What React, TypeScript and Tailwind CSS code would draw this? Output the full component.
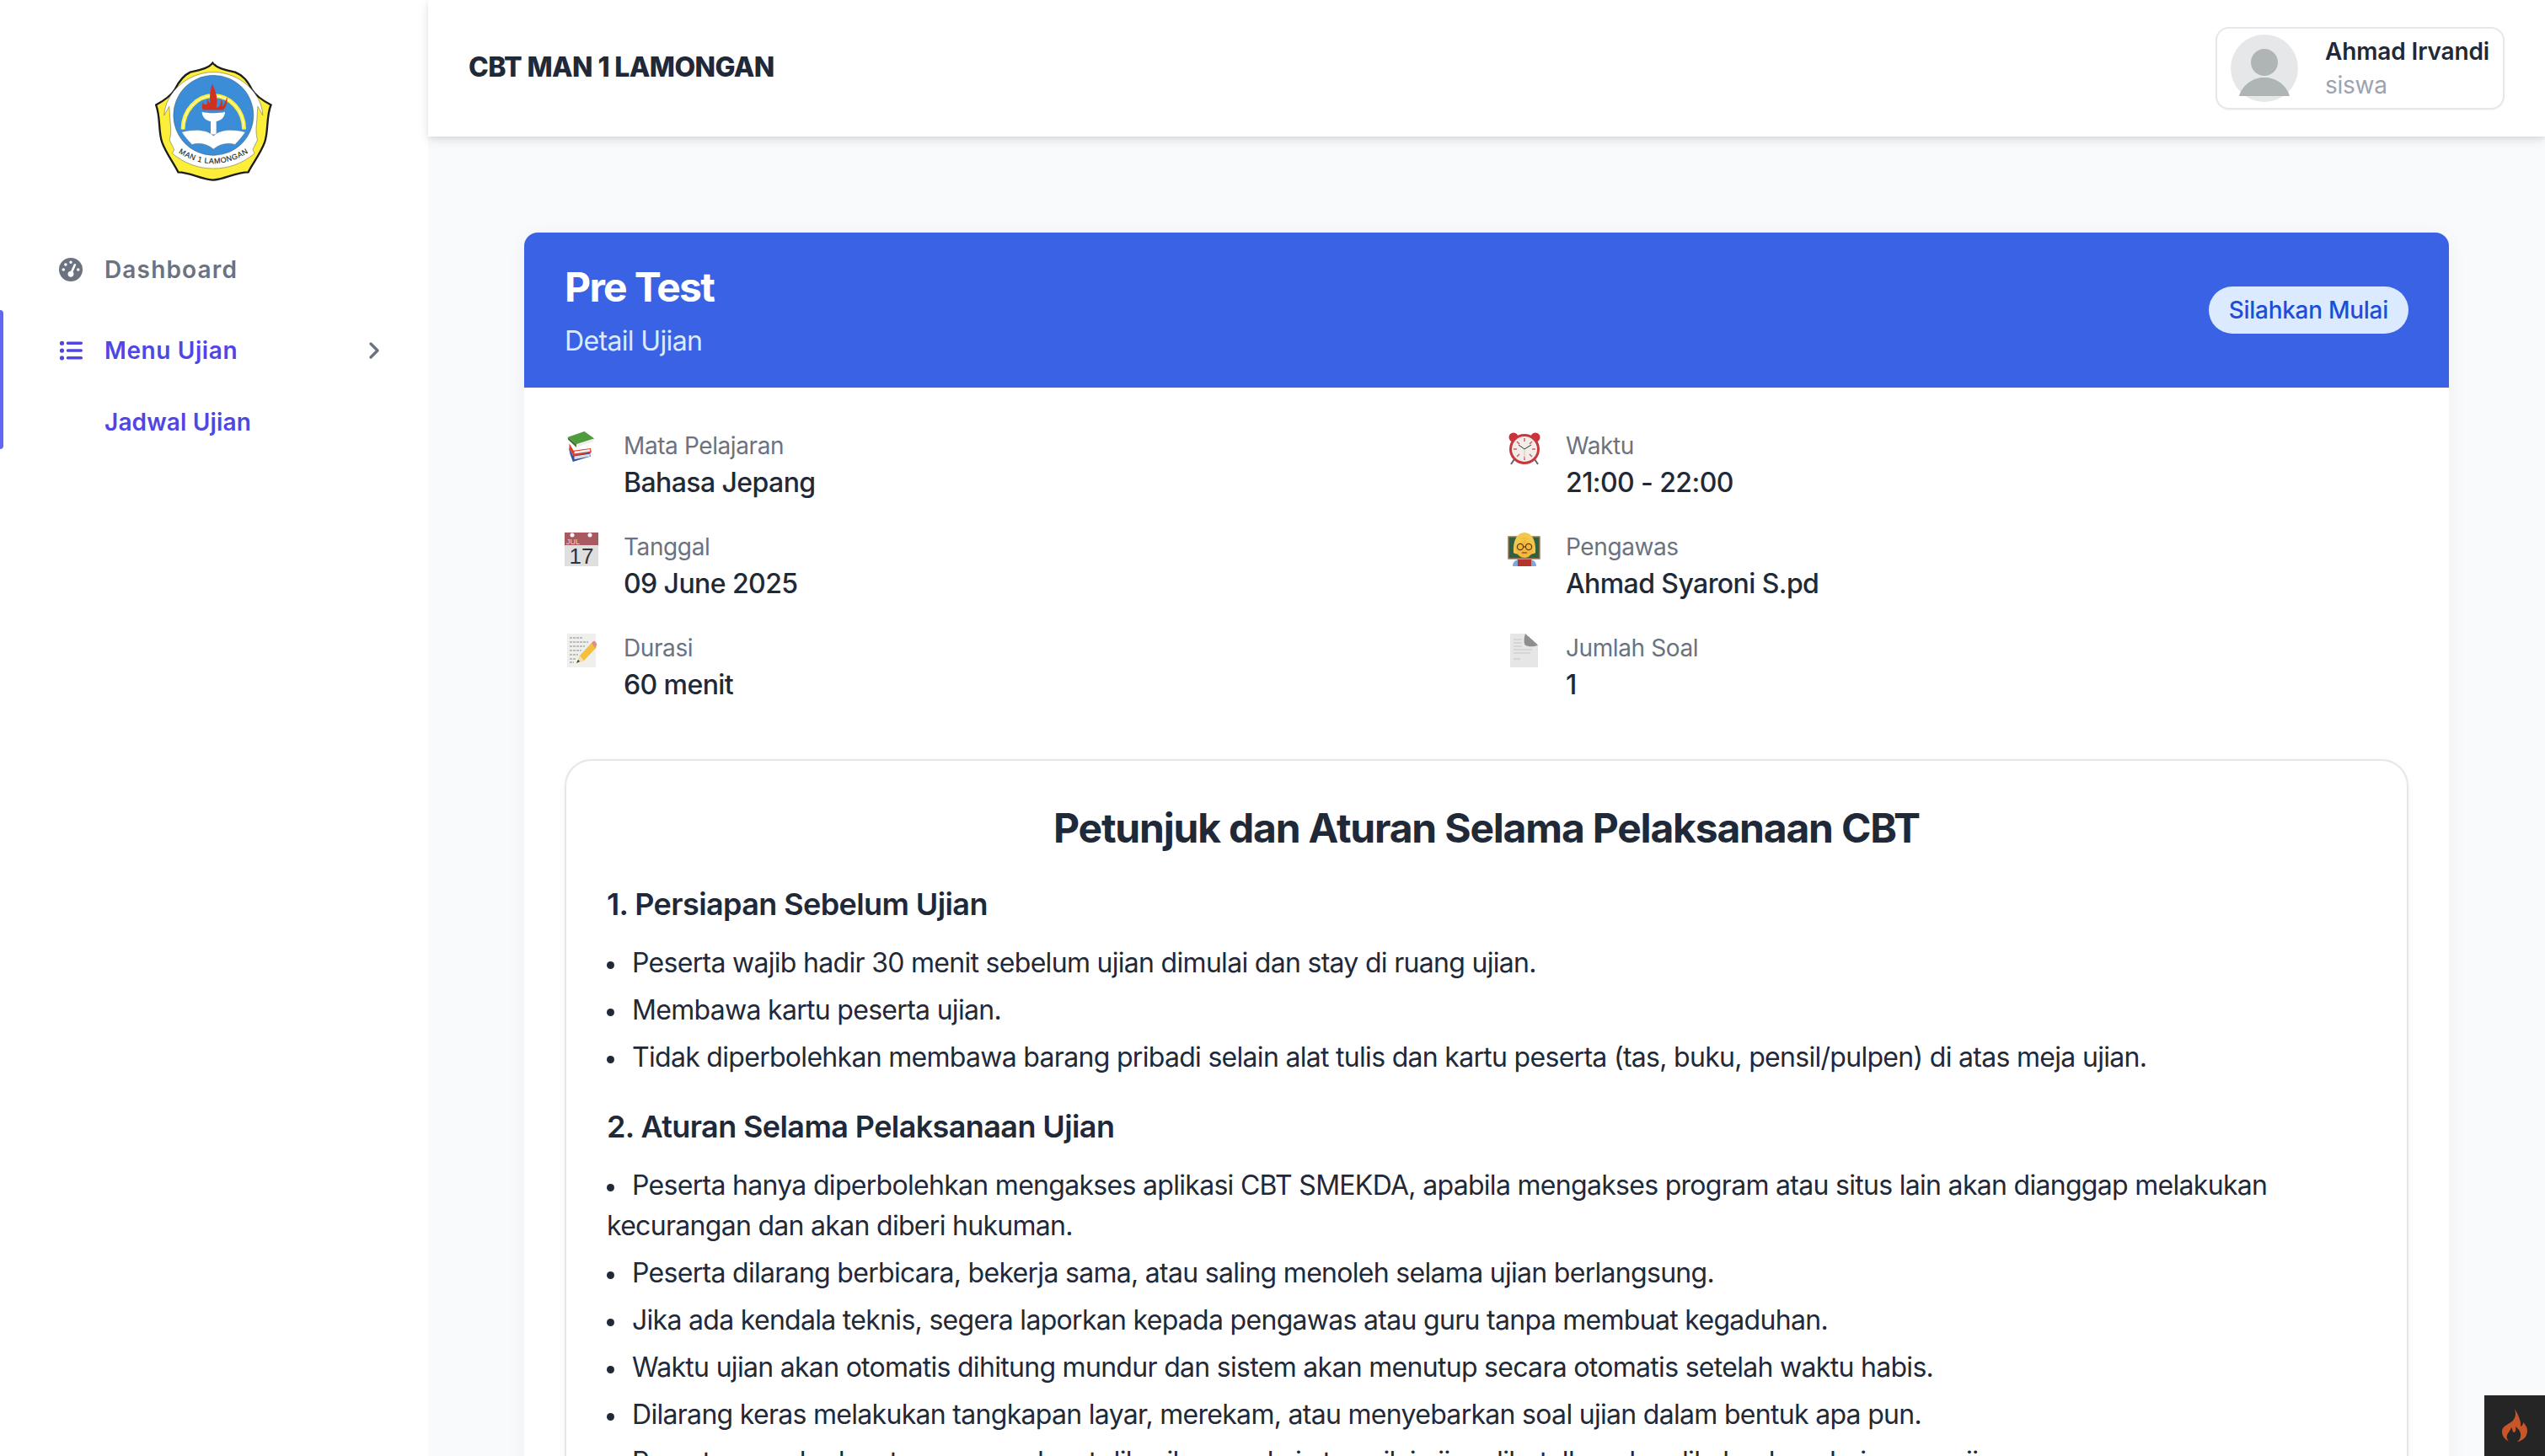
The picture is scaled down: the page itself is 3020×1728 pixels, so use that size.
import React from "react";
import { FaGaugeHigh, FaListUl } from "react-icons/fa6";
import { ChevronRight } from "lucide-react";

const Logo = () => (
  <svg viewBox="100 70 420 430" className="w-[140px] h-[143px]">
    <path d="M305 75C320 95 350 100 385 108C415 120 430 140 445 170C460 195 485 210 513 225C495 270 505 320 490 360C475 400 450 430 432 465C385 465 350 490 305 493C260 490 225 465 182 465C165 430 140 400 125 360C110 320 120 270 103 225C130 210 155 195 170 170C185 140 200 120 225 108C260 100 290 95 305 75Z" fill="#fdee3a" stroke="#1c1c1c" strokeWidth="7" />
    <path d="M308 108C400 108 480 180 484 262L466 230L462 290C458 320 462 340 465 350L448 385L455 398C410 435 360 452 308 452C256 452 206 435 161 398L168 385L151 350C154 340 158 320 154 290L150 230L132 262C136 180 216 108 308 108Z" fill="#fff" stroke="#555" strokeWidth="1.5" />
    <circle cx="308" cy="262" r="143" fill="#3b8dd8" stroke="#333" strokeWidth="1" />
    <path d="M199 312A109 120 0 0 1 417 312" fill="none" stroke="#fdee3a" strokeWidth="15" />
    <path d="M199 312A109 120 0 0 1 417 312" fill="none" stroke="#fff" strokeWidth="3" />
    <path d="M303 150C315 175 325 195 318 235C330 235 335 220 335 205C342 215 340 225 338 232C345 228 352 210 357 195C358 215 352 235 342 243L272 243C265 238 268 225 270 215C275 225 280 225 285 222C285 215 285 208 288 205C290 212 293 218 297 218C292 195 298 170 303 150Z" fill="#d0301f" />
    <path d="M267 250C285 256 330 256 349 250C349 268 335 282 318 284L318 330L298 330L298 284C281 282 267 268 267 250Z" fill="#fff" />
    <path d="M195 322C240 310 285 312 308 335C331 312 376 310 421 322C410 340 400 350 385 366C355 358 330 365 308 383C286 365 261 358 231 366C216 350 206 340 195 322Z" fill="#fff" stroke="#666" strokeWidth="1" />
    <path id="logo-arc" d="M172 388Q305 480 445 388" fill="none" />
    <text fontFamily="'Liberation Sans', sans-serif" fontSize="27" fill="#222" stroke="#222" strokeWidth="0.4" letterSpacing="1.5">
      <textPath href="#logo-arc" startOffset="50%" textAnchor="middle">MAN 1 LAMONGAN</textPath>
    </text>
  </svg>
);

const Books = () => (
  <svg viewBox="0 0 40 40" className="ml-[3px] w-[34px] h-[38px]" preserveAspectRatio="none">
    <path d="M2 20L4 28L8 38L33 31L32 24L8 30Z" fill="#2f4fa8" />
    <path d="M3 15L9 24L33 21L34 26L9 31L3 22Z" fill="#d6402a" />
    <path d="M10 25L32 22L32 25L10 28Z" fill="#eee" />
    <path d="M10 31L33 28L32 31L10 35Z" fill="#ddd" />
    <path d="M1 7L24 0L38 9L13 16Z" fill="#4f9c3f" />
    <path d="M1 7L13 16L13 20L1 10Z" fill="#3a7a2e" />
    <path d="M13 16L38 9L36 13L13 20Z" fill="#eee" />
  </svg>
);

const Calendar = () => (
  <svg viewBox="0 0 40 40" className="w-[40px] h-[40px]">
    <rect x="0" y="0" width="40" height="40" fill="#dfdfdf" />
    <rect x="0" y="0" width="40" height="15" fill="#a85a60" />
    <circle cx="9" cy="3" r="2.5" fill="#fff" />
    <circle cx="30" cy="3" r="2.5" fill="#fff" />
    <text x="2" y="14" fontSize="9" fill="#e9d5d6" fontFamily="'Liberation Sans', sans-serif">JUL</text>
    <text x="20" y="37" fontSize="26" textAnchor="middle" fill="#333" fontFamily="'Liberation Sans', sans-serif">17</text>
  </svg>
);

const Memo = () => (
  <svg viewBox="0 0 40 40" className="w-[40px] h-[40px]">
    <rect x="3" y="0" width="34" height="40" fill="#efefec" />
    <path d="M6 5H22M6 10H28M6 15H24M6 20H20M6 25H16M6 30H13M6 34H11" stroke="#8a8a8a" strokeWidth="1.2" strokeDasharray="3 1" />
    <path d="M14 35L18 26L32 11L38 16L23 32Z" fill="#f4bf3a" />
    <path d="M32 11L34 9C36 8 39 12 38 14L36 17Z" fill="#e58a8a" />
    <path d="M14 35L18 26L23 32Z" fill="#f2dcb0" />
    <path d="M14 35L16 31L18 33Z" fill="#333" />
  </svg>
);

const Clock = () => (
  <svg viewBox="0 0 40 40" className="ml-[1px] w-[40px] h-[40px]">
    <path d="M8 33L4 39M32 33L36 39" stroke="#666" strokeWidth="2" />
    <circle cx="7" cy="7" r="5.5" fill="#c9343a" />
    <circle cx="33" cy="7" r="5.5" fill="#c9343a" />
    <circle cx="20" cy="21" r="18" fill="#c6383e" />
    <circle cx="20" cy="21" r="15" fill="#f1eeea" />
    <path d="M20 8V12M20 30V34M7 21H11M29 21H33M11 12L14 15M29 12L26 15M11 30L14 27M29 30L26 27" stroke="#d95a5f" strokeWidth="1.5" />
    <path d="M13 16L20 21L28 16" stroke="#333" strokeWidth="1" fill="none" />
    <path d="M20 21V32" stroke="#d8c9a8" strokeWidth="1" />
  </svg>
);

const Teacher = () => (
  <svg viewBox="0 0 40 40" className="ml-[1px] w-[40px] h-[40px]">
    <rect x="1" y="5" width="37" height="26" fill="#2f5f45" stroke="#a0764a" strokeWidth="1.5" />
    <path d="M6 40C6 33 12 31 20 31C28 31 34 33 34 40Z" fill="#7fa6d9" />
    <rect x="12" y="32" width="16" height="8" fill="#b5322e" />
    <path d="M7 24C6 8 12 0 20 0C28 0 34 8 33 24C30 27 10 27 7 24Z" fill="#f2c94c" />
    <ellipse cx="20" cy="18" rx="10.5" ry="12" fill="#f5b83d" />
    <path d="M10 16C14 14 18 10 21 8C23 11 27 14 30 16L30 8L10 8Z" fill="#f2c94c" />
    <circle cx="15" cy="17" r="3.6" fill="none" stroke="#5a3a1a" strokeWidth="1.2" />
    <circle cx="25" cy="17" r="3.6" fill="none" stroke="#5a3a1a" strokeWidth="1.2" />
    <path d="M18.6 17H21.4" stroke="#5a3a1a" strokeWidth="1.2" />
    <path d="M17 24H23" stroke="#8a4a1a" strokeWidth="1.4" />
  </svg>
);

const PageIcon = () => (
  <svg viewBox="0 0 40 40" className="w-[40px] h-[40px]">
    <path d="M4 0H22C24 6 28 13 37 14V40H4Z" fill="#e6e6e6" />
    <path d="M22 0C25 3 34 10 37 14C30 16 22 16 21 12C20 8 21 3 22 0Z" fill="#8e8e8e" />
    <path d="M8 7H18M8 11H18M8 15H18M8 19H30M8 23H28M8 30H16" stroke="#cfcfcf" strokeWidth="1.4" />
  </svg>
);

const Flame = () => (
  <svg viewBox="0 0 32 40" className="w-[32px] h-[40px]">
    <path d="M16 0C18 6 17 10 14 14C10 18 1 20 1 27C1 33 5 36 9 39C7 36 6 34 7 31C8 28 11 26 12 22C14 25 13 27 15 28C17 28 18 25 17 21C21 24 24 28 23 33C22.5 36 21 37 19 39C26 38 31 33 31 26C31 22 29 19 26 16C26 19 25 20 23 21C24 16 21 8 16 0Z" fill="#c85628" />
    <path d="M15 30C18 31 20 34 18 38H13C11 35 12 32 15 30Z" fill="#252525" />
  </svg>
);

const details = [
  { icon: <Books />, label: "Mata Pelajaran", value: "Bahasa Jepang" },
  { icon: <Clock />, label: "Waktu", value: "21:00 - 22:00" },
  { icon: <Calendar />, label: "Tanggal", value: "09 June 2025" },
  { icon: <Teacher />, label: "Pengawas", value: "Ahmad Syaroni S.pd" },
  { icon: <Memo />, label: "Durasi", value: "60 menit" },
  { icon: <PageIcon />, label: "Jumlah Soal", value: "1" },
];

const sec1 = [
  "Peserta wajib hadir 30 menit sebelum ujian dimulai dan stay di ruang ujian.",
  "Membawa kartu peserta ujian.",
  "Tidak diperbolehkan membawa barang pribadi selain alat tulis dan kartu peserta (tas, buku, pensil/pulpen) di atas meja ujian.",
];
const sec2 = [
  "Peserta hanya diperbolehkan mengakses aplikasi CBT SMEKDA, apabila mengakses program atau situs lain akan dianggap melakukan kecurangan dan akan diberi hukuman.",
  "Peserta dilarang berbicara, bekerja sama, atau saling menoleh selama ujian berlangsung.",
  "Jika ada kendala teknis, segera laporkan kepada pengawas atau guru tanpa membuat kegaduhan.",
  "Waktu ujian akan otomatis dihitung mundur dan sistem akan menutup secara otomatis setelah waktu habis.",
  "Dilarang keras melakukan tangkapan layar, merekam, atau menyebarkan soal ujian dalam bentuk apa pun.",
  "Peserta yang kedapatan curang dapat diberikan sanksi atau nilai ujian dibatalkan dan dikeluarkan dari ruang ujian.",
];

const Item = ({ text }: { text: string }) => (
  <li className="mb-[8px] text-[32px] leading-[48px] tracking-[-0.7px]">
    <span className="mr-[21px] inline-block h-[9px] w-[9px] rounded-full bg-current align-middle" />
    {text}
  </li>
);

export default function App() {
  return (
    <div className="relative flex h-[1728px] w-[3020px] overflow-hidden bg-[#f9fafb] font-['Inter',sans-serif] text-[#1f2937]">
      <aside className="flex w-[508px] shrink-0 flex-col bg-white">
        <div className="flex justify-center pt-[73px]">
          <Logo />
        </div>
        <nav className="mt-[56px] flex flex-col">
          <div className="flex h-[96px] items-center gap-[26px] pl-[70px] text-[28px] font-semibold tracking-[1.15px] text-[#6b7280]">
            <FaGaugeHigh className="h-[28px] w-[28px]" />
            <span>Dashboard</span>
          </div>
          <div className="relative h-[165px]">
            <div className="absolute left-0 top-0 h-[165px] w-[4px] rounded-r-[4px] bg-[#6366f1]" />
            <div className="flex h-[95px] items-center gap-[26px] pl-[70px] pr-[48px] text-[28px] font-semibold tracking-[0.6px] text-[#4f46e5]">
              <FaListUl className="h-[28px] w-[28px]" />
              <span>Menu Ujian</span>
              <ChevronRight className="ml-auto h-[32px] w-[32px] text-[#6b7280]" strokeWidth={2.5} />
            </div>
            <div className="mt-[10px] pl-[124px] text-[28px] font-semibold leading-[56px] tracking-[0.15px] text-[#4f46e5]">Jadwal Ujian</div>
          </div>
        </nav>
      </aside>

      <main className="flex min-w-0 flex-1 flex-col">
        <header className="z-10 flex h-[162px] shrink-0 items-center justify-between bg-white pl-[48px] pr-[48px] shadow-[0_4px_12px_rgba(0,0,0,0.1),0_2px_6px_rgba(0,0,0,0.06)]">
          <h1 className="-mt-[3px] text-[32px] font-extrabold tracking-[-0.6px] text-[#1f2937]">CBT MAN 1 LAMONGAN</h1>
          <div className="flex h-[98px] items-center gap-[32px] rounded-[16px] border-2 border-[#e5e7eb] pl-[16px] pr-[16px] shadow-[0_1px_2px_rgba(0,0,0,0.05)]">
            <svg viewBox="0 0 80 80" className="h-[80px] w-[80px]">
              <circle cx="40" cy="40" r="40" fill="#e5e7e9" />
              <circle cx="40" cy="33" r="16" fill="#afb4b5" />
              <path d="M10 73C14 59 27 51 40 51C53 51 66 59 70 73Z" fill="#afb4b5" />
            </svg>
            <div className="flex flex-col">
              <span className="text-[28px] font-semibold leading-[40px] tracking-[-0.15px] text-[#1f2937]">Ahmad Irvandi</span>
              <span className="text-[28px] leading-[40px] tracking-[-0.3px] text-[#9ca3af]">siswa</span>
            </div>
          </div>
        </header>

        <div className="px-[114px] pt-[114px]">
          <section className="rounded-[16px] bg-white shadow-[0_4px_24px_rgba(0,0,0,0.05)]">
            <div className="flex h-[184px] items-center justify-between rounded-t-[16px] bg-[#3a62e5] px-[48px]">
              <div className="flex flex-col gap-[8px] pt-[2px]">
                <h2 className="text-[48px] font-bold leading-[64px] tracking-[-1.7px] text-white">Pre Test</h2>
                <p className="text-[32px] leading-[48px] tracking-[-0.65px] text-[#dbeafe]">Detail Ujian</p>
              </div>
              <span className="rounded-full bg-[#dbeafe] px-[24px] text-[28px] font-medium leading-[56px] tracking-[-0.28px] text-[#1d4ed8]">Silahkan Mulai</span>
            </div>

            <div className="p-[48px] pt-[49px]">
              <div className="grid grid-cols-2 gap-x-[48px] gap-y-[32px]">
                {details.map((d) => (
                  <div key={d.label} className="flex items-start">
                    <div className="w-[70px] shrink-0 pt-[3px]">{d.icon}</div>
                    <div>
                      <div className="text-[28px] leading-[40px] tracking-[-0.4px] text-[#6b7280]">{d.label}</div>
                      <div className="text-[32px] font-medium leading-[48px] tracking-[-0.58px] text-[#1f2937]">{d.value}</div>
                    </div>
                  </div>
                ))}
              </div>

              <div className="mt-[64px] rounded-[32px] border-2 border-[#e5e7eb] bg-white p-[48px] shadow-[0_1px_6px_rgba(0,0,0,0.05)]">
                <h3 className="mb-[30px] text-center text-[48px] font-bold leading-[64px] tracking-[-1.2px]">Petunjuk dan Aturan Selama Pelaksanaan CBT</h3>
                <h4 className="mb-[18px] text-[36px] font-semibold leading-[56px] tracking-[-0.6px]">1. Persiapan Sebelum Ujian</h4>
                <ul>
                  {sec1.map((t) => (
                    <Item key={t} text={t} />
                  ))}
                </ul>
                <h4 className="mb-[18px] mt-[30px] text-[36px] font-semibold leading-[56px] tracking-[-0.6px]">2. Aturan Selama Pelaksanaan Ujian</h4>
                <ul>
                  {sec2.map((t) => (
                    <Item key={t} text={t} />
                  ))}
                </ul>
              </div>
            </div>
          </section>
        </div>
      </main>

      <div className="absolute bottom-0 right-0 flex h-[72px] w-[72px] items-center justify-center bg-[#252525]">
        <Flame />
      </div>
    </div>
  );
}
